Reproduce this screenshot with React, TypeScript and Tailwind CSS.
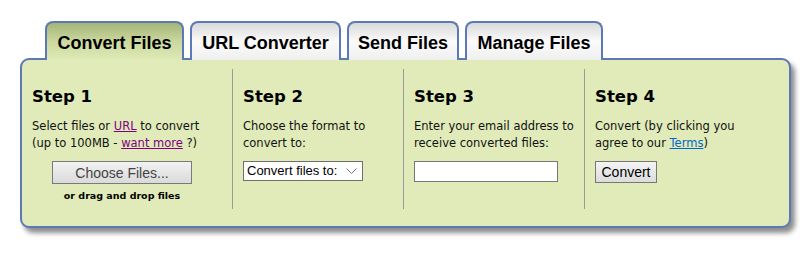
import React from 'react';

const tabs = [
  { label: 'Convert Files', width: 'w-[139px]', active: true },
  { label: 'URL Converter', width: 'w-[151px]', active: false },
  { label: 'Send Files', width: 'w-[112px]', active: false },
  { label: 'Manage Files', width: 'w-[138px]', active: false },
];

const Tab = ({ label, width, active }: { label: string; width: string; active: boolean }) => (
  <div
    className={`${width} h-[39px] -mb-[2px] flex items-center justify-center rounded-t-[8px] border-2 border-b-0 border-[#5b79b4] text-[18px] font-bold text-black pt-[4px] ${
      active
        ? 'bg-gradient-to-b from-[#a5b578] via-[#cbd89e] to-[#dfeab6]'
        : 'bg-gradient-to-b from-[#d9d9d9] via-[#fbfbfb] to-[#efefef]'
    }`}
    style={{ fontFamily: 'Liberation Sans, Arial, sans-serif' }}
  >
    {label}
  </div>
);

const StepTitle = ({ n }: { n: number }) => (
  <h2 className="text-[16.5px] font-bold leading-[22px] mb-[10px]">Step {n}</h2>
);

export default function App() {
  return (
    <div className="w-[808px] h-[255px] bg-white pt-[21px] pl-[20px]" style={{ fontFamily: '"DejaVu Sans", Verdana, sans-serif' }}>
      {/* Tabs */}
      <div className="flex gap-[6px] ml-[25px] relative z-10">
        {tabs.map(t => (
          <Tab key={t.label} {...t} />
        ))}
      </div>

      {/* Panel */}
      <div className="w-[771px] h-[170px] bg-[#e0ebb9] border-2 border-[#5b79b4] rounded-[9px] shadow-[4px_5px_5px_rgba(0,0,0,0.45)] pt-[9px] flex">
        {/* Step 1 */}
        <div className="w-[211px] h-[140px] border-r border-[#9a9a9a] pl-[10px] pr-[20px] pt-[17px]">
          <StepTitle n={1} />
          <p className="text-[11.5px] leading-[17px] text-[#111]">
            Select files or <a className="text-[#800080] underline">URL</a> to convert
            <br />
            (up to 100MB - <a className="text-[#800080] underline">want more</a> ?)
          </p>
          <div className="flex flex-col items-center mt-[9px]">
            <button
              className="w-[140px] h-[23px] border border-[#7a7a7a] bg-gradient-to-b from-[#f2f2f2] to-[#dadada] text-[14px] text-[#444] leading-none"
              style={{ fontFamily: 'Liberation Sans, Arial, sans-serif' }}
            >
              Choose Files...
            </button>
            <span className="text-[9.5px] font-bold mt-[5px]">or drag and drop files</span>
          </div>
        </div>

        {/* Step 2 */}
        <div className="w-[171px] h-[140px] border-r border-[#9a9a9a] pl-[10px] pt-[17px]">
          <StepTitle n={2} />
          <p className="text-[11.5px] leading-[17px] text-[#111]">
            Choose the format to
            <br />
            convert to:
          </p>
          <div
            className="mt-[9px] w-[120px] h-[20px] bg-white border border-[#6f6f6f] flex items-center justify-between pl-[3px] pr-[5px] text-[13px] text-black"
            style={{ fontFamily: 'Liberation Sans, Arial, sans-serif' }}
          >
            <span>Convert files to:</span>
            <svg width="11" height="7" viewBox="0 0 11 7" fill="none" stroke="#777" strokeWidth="1">
              <path d="M0.5 0.5 L5.5 5.5 L10.5 0.5" />
            </svg>
          </div>
        </div>

        {/* Step 3 */}
        <div className="w-[181px] h-[140px] border-r border-[#9a9a9a] pl-[10px] pt-[17px]">
          <StepTitle n={3} />
          <p className="text-[11.5px] leading-[17px] text-[#111]">
            Enter your email address to
            <br />
            receive converted files:
          </p>
          <input
            type="text"
            className="block mt-[9px] w-[144px] h-[21px] bg-white border border-[#777] outline-none"
          />
        </div>

        {/* Step 4 */}
        <div className="flex-1 h-[140px] pl-[10px] pt-[17px]">
          <StepTitle n={4} />
          <p className="text-[11.5px] leading-[17px] text-[#111]">
            Convert (by clicking you
            <br />
            agree to our <a className="text-[#0068c8] underline">Terms</a>)
          </p>
          <button
            className="block mt-[9px] w-[62px] h-[22px] border border-[#777] bg-gradient-to-b from-[#f4f4f4] to-[#dcdcdc] text-[14px] text-black leading-none"
            style={{ fontFamily: 'Liberation Sans, Arial, sans-serif' }}
          >
            Convert
          </button>
        </div>
      </div>
    </div>
  );
}
